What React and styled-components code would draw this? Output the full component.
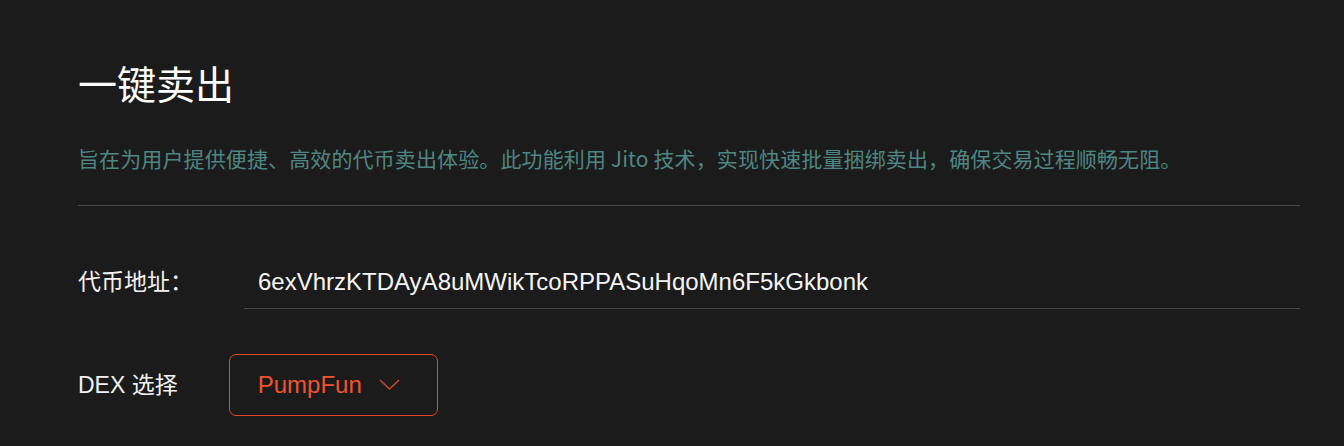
import React from "react";
import styled, { createGlobalStyle } from "styled-components";

const GlobalStyle = createGlobalStyle`
  html, body {
    margin: 0;
    padding: 0;
    background: #1b1b1b;
  }
  body {
    font-family: "Liberation Sans", "Noto Sans CJK SC", sans-serif;
    color: #ffffff;
  }
`;

const Page = styled.div`
  box-sizing: border-box;
  width: 1344px;
  height: 446px;
  padding: 59px 44px 0 78px;
  background: #1b1b1b;
  overflow: hidden;
`;

const Title = styled.h1`
  margin: 0;
  font-family: "Noto Sans CJK SC", sans-serif;
  font-weight: 400;
  font-size: 39px;
  line-height: 47px;
  color: #ffffff;
`;

const Description = styled.p`
  margin: 37px 0 0;
  font-family: "Noto Sans CJK SC", sans-serif;
  font-size: 21px;
  line-height: 30px;
  letter-spacing: 0.12px;
  color: #4f8683;
  white-space: nowrap;
`;

const Divider = styled.hr`
  margin: 32px 0 0;
  border: none;
  border-top: 1px solid #474747;
  height: 0;
`;

const Row = styled.div`
  display: flex;
  align-items: center;
  gap: 51px;
  margin-top: ${(p) => p.$top}px;
`;

const Label = styled.label`
  flex: none;
  font-family: "Liberation Sans", "Noto Sans CJK SC", sans-serif;
  font-size: 23px;
  line-height: 30px;
  color: #f2f2f2;
  white-space: nowrap;
`;

const AddressInput = styled.input`
  flex: 1;
  min-width: 0;
  box-sizing: border-box;
  height: 54px;
  padding: 0 14px;
  background: transparent;
  border: none;
  border-bottom: 1px solid #474747;
  outline: none;
  font-family: "Liberation Sans", sans-serif;
  font-size: 24px;
  color: #f5f5f5;
`;

const Select = styled.button`
  box-sizing: border-box;
  display: flex;
  align-items: center;
  gap: 17px;
  width: 209px;
  height: 62px;
  padding: 0 28px;
  background: transparent;
  border: 1px solid #e0492b;
  border-radius: 7px;
  font-family: "Liberation Sans", sans-serif;
  font-size: 24px;
  color: #f0542f;
  cursor: pointer;
`;

const Chevron = () => (
  <svg width="21" height="12" viewBox="0 0 21 12" fill="none">
    <polyline
      points="1.5,1.5 10.5,10 19.5,1.5"
      stroke="#c8462b"
      strokeWidth="1.7"
      strokeLinecap="round"
      strokeLinejoin="round"
    />
  </svg>
);

export default function App() {
  return (
    <>
      <GlobalStyle />
      <Page>
        <Title>一键卖出</Title>
        <Description>
          旨在为用户提供便捷、高效的代币卖出体验。此功能利用 Jito 技术，实现快速批量捆绑卖出，确保交易过程顺畅无阻。
        </Description>
        <Divider />
        <Row $top={49}>
          <Label>代币地址：</Label>
          <AddressInput
            readOnly
            value="6exVhrzKTDAyA8uMWikTcoRPPASuHqoMn6F5kGkbonk"
          />
        </Row>
        <Row $top={45}>
          <Label>DEX 选择</Label>
          <Select type="button">
            <span>PumpFun</span>
            <Chevron />
          </Select>
        </Row>
      </Page>
    </>
  );
}
